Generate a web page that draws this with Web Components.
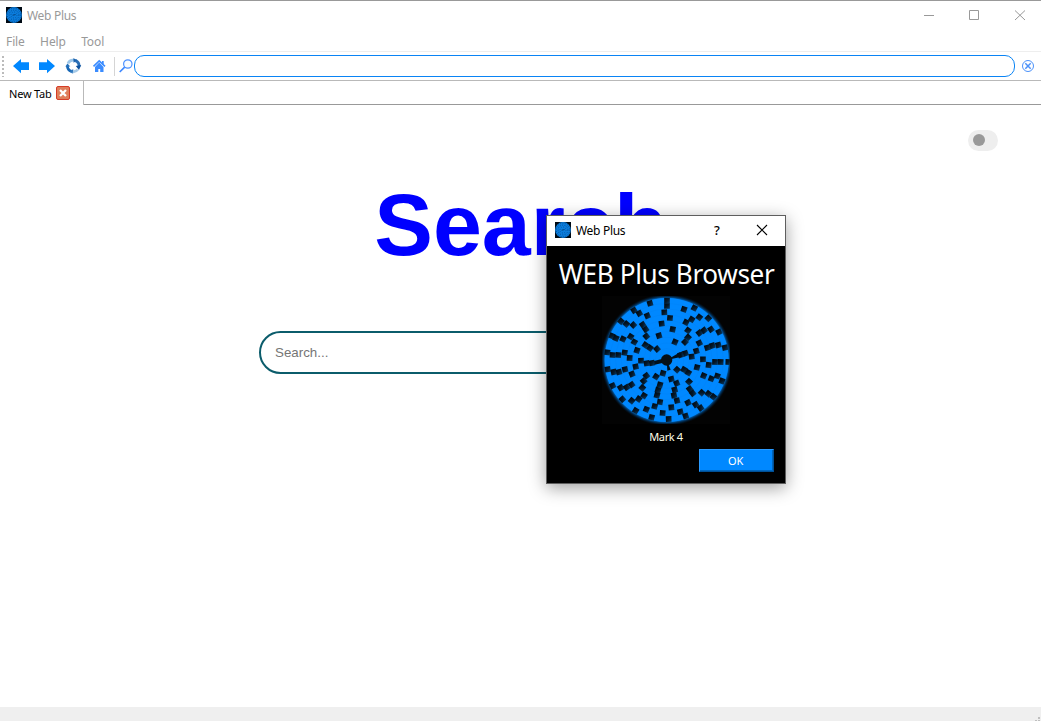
<!DOCTYPE html>
<html lang="en">
<head>
<meta charset="utf-8">
<title>Web Plus</title>
<style>
html,body{margin:0;width:1041px;height:721px;overflow:hidden;background:#fff;font-family:"Noto Sans",sans-serif}
</style>
</head>
<body>
<wp-window></wp-window>
<script>
const define = (name, html, setup) => {
  const t = document.createElement('template');
  t.innerHTML = html;
  customElements.define(name, class extends HTMLElement {
    constructor() {
      super();
      this.attachShadow({mode: 'open'}).append(t.content.cloneNode(true));
      if (setup) setup(this.shadowRoot);
    }
  });
};

define('wp-logo', `
<style>:host{display:block;width:16px;height:16px;flex:none;margin-bottom:2px}svg{display:block}</style>
<svg width="16" height="16" viewBox="0 0 16 16"><rect width="16" height="16" fill="#000a14"/><circle cx="8" cy="8" r="7.9" fill="#0b7ddd"/>
<g fill="none" stroke="#034b8e" stroke-width=".9"><circle cx="8" cy="8" r="6.8" stroke-dasharray="1.1 1.3"/><circle cx="8" cy="8" r="4.9" stroke-dasharray="1 1.4"/><circle cx="8" cy="8" r="3" stroke-dasharray=".8 1.5"/></g><path d="M6.6 8.2l3-.6" stroke="#023a70" stroke-width=".9"/></svg>`);

/* Centres of the small tiles on the disc, in thirds of a pixel. */
const tiles = [
[207,32],[207,48],[156,40],[108,61],[124,70],[148,77],[199,67],[258,58],[289,54],[216,84],[191,101],[281,88],[304,82],[331,85],[264,97],[69,94],[85,102],[106,105],[134,104],[143,118],[183,137],[224,118],[270,121],[304,129],[318,121],[339,118],[363,126],[270,142],[261,156],[231,156],[304,159],[42,138],[54,145],[75,147],[98,140],[109,156],[145,139],[142,165],[156,174],[177,177],[117,181],[28,187],[44,195],[61,195],[80,188],[95,204],[129,212],[146,220],[162,219],[262,190],[248,195],[295,183],[281,200],[328,173],[343,167],[361,165],[381,173],[315,208],[332,225],[351,216],[368,216],[391,216],[29,238],[47,246],[63,246],[81,238],[113,230],[102,252],[145,257],[174,260],[195,250],[237,239],[258,239],[271,248],[297,232],[317,257],[340,266],[358,258],[372,273],[44,287],[68,293],[86,292],[101,284],[137,273],[133,293],[186,284],[180,300],[177,316],[220,267],[236,280],[230,299],[228,316],[273,275],[275,297],[284,310],[311,308],[331,311],[346,320],[73,328],[101,332],[122,327],[138,317],[170,349],[186,336],[145,358],[113,362],[161,382],[194,369],[212,387],[220,352],[237,332],[270,338],[293,344],[308,354],[247,365],[263,378]];
define('wp-disc', `
<style>:host{display:block;width:128px;height:128px}svg{display:block}</style>
<svg width="128" height="128" viewBox="12 18 384 384">
<defs><radialGradient id="r" gradientUnits="userSpaceOnUse" cx="206" cy="210" r="198"><stop offset=".93" stop-color="#0078e0"/><stop offset="1" stop-color="#001a33" stop-opacity="0"/></radialGradient>
<linearGradient id="g" x1="0" y1="0" x2="1" y2="1"><stop offset="0" stop-color="#00070e"/><stop offset=".5" stop-color="#041727"/><stop offset="1" stop-color="#073b68"/></linearGradient></defs>
<rect x="12" y="18" width="384" height="384" fill="#030303"/>
<circle cx="206" cy="210" r="198" fill="url(#r)"/><circle cx="206" cy="210" r="186" fill="#0088ff"/>
<g fill="none" stroke="#0081f2" stroke-width="1"><circle cx="206" cy="210" r="170"/><circle cx="206" cy="210" r="153"/><circle cx="206" cy="210" r="136"/><circle cx="206" cy="210" r="119"/><circle cx="206" cy="210" r="102"/><circle cx="206" cy="210" r="85"/><circle cx="206" cy="210" r="68"/><circle cx="206" cy="210" r="51"/><circle cx="206" cy="210" r="34"/></g>
<g id="tiles" fill="url(#g)"></g>
<path d="M206 210L246 187L252 200ZM206 203L168 213L170 224L206 216ZM206 210L208 242L218 239Z" fill="#02101c"/>
<circle cx="206" cy="210" r="17" fill="#061018"/></svg>`, root => {
  const g = root.getElementById('tiles');
  for (const [x, y] of tiles) {
    const r = document.createElementNS('http://www.w3.org/2000/svg', 'rect');
    const a = Math.atan2(y - 210, x - 206) * 180 / Math.PI;
    const turn = ((a % 90) + 90) % 90;
    r.setAttribute('x', -8.5); r.setAttribute('y', -8.5);
    r.setAttribute('width', 17); r.setAttribute('height', 17);
    r.setAttribute('transform', `translate(${x} ${y}) rotate(${turn > 45 ? turn - 90 : turn})`);
    g.append(r);
  }
});

define('wp-titlebar', `
<style>:host{display:flex;height:30px;align-items:center;padding-left:6px;color:#999;font-size:12px;line-height:16px}
span{margin-left:5px;flex:1;letter-spacing:-.3px}svg{display:block}</style>
<wp-logo></wp-logo><span>Web Plus</span>
<svg width="119" height="30" viewBox="922 1 119 30" fill="none" stroke="#999"><path d="M924 15.5h10M969.5 10.5h9v9h-9z"/><path d="M1015 10.5l10 9.5M1025 10.5l-10 9.5"/></svg>`);

define('wp-menubar', `
<style>:host{display:flex;height:20px;padding-left:6px;gap:15.3px;color:#999;font-size:12px;line-height:21px;letter-spacing:-.1px;border-bottom:1px solid #eee}</style>
<span>File</span><span>Help</span><span>Tool</span>`);

define('wp-toolbar', `
<style>:host{display:flex;height:28px;align-items:center;border-bottom:1px solid #b9b9b9}
svg{display:block;flex:none}.url{box-sizing:border-box;height:22px;flex:1;border:1px solid #0a84f5;border-radius:10px;background:#fff}</style>
<svg width="134" height="28" viewBox="0 52 134 28">
<path d="M3 56v21" stroke="#bbb" stroke-width="2" stroke-dasharray="2 2"/>
<path d="M13 66L21 59V62.3H29V70H21V73.2Z" fill="#0088ff"/><path d="M55 66L47 59V62.3H39V70H47V73.2Z" fill="#0088ff"/>
<g fill="none" stroke-width="2.8"><path d="M68 63.5A5.8 5.8 0 0 1 74 60.2" stroke="#9cc6e8"/><path d="M75.5 60.6A5.8 5.8 0 0 1 79 66.5" stroke="#2b6fb6"/><path d="M77.8 69.5A5.8 5.8 0 0 1 72.5 71.7" stroke="#a5c9e7"/><path d="M71.5 71.4A5.8 5.8 0 0 1 67.4 66" stroke="#1767b6"/></g>
<path d="M75.8 66L81.2 65L79 70Z" fill="#0d519e"/><path d="M73.3 58.3L77.5 60L73.6 62.8Z" fill="#1c63ae"/><path d="M73.3 69L72.6 73.8L69.5 71.6Z" fill="#2c76bd"/><path d="M65.3 66.6L67.5 63.4L70.3 66.6Z" fill="#2470ba"/>
<path d="M93.5 66.3L99.2 60.8L105 66.3" fill="none" stroke="#3b8cff" stroke-width="1.6"/><path d="M102 61h1.7v3.5H102zM95 67L99.2 62.5L103.5 67V72H100.2V69H98.3V72H95Z" fill="#3b8cff"/>
<path d="M114.5 57v19" stroke="#d5d5d5"/>
<circle cx="127.8" cy="64" r="4.2" fill="#f8fbff" stroke="#4b91ff" stroke-width="1.2"/><path d="M124.7 67.2L119.7 72" stroke="#3b86ff" stroke-width="1.6"/>
</svg><div class="url"></div>
<svg width="26" height="28" viewBox="1015 52 26 28" fill="none" stroke="#4a91fa"><circle cx="1028" cy="66" r="5.5"/><path d="M1025.3 63.3l5.4 5.4M1030.7 63.3l-5.4 5.4" stroke-width="1.5"/></svg>`);

define('wp-tabs', `
<style>:host{display:flex;height:24px}.tab{box-sizing:border-box;width:84px;display:flex;align-items:center;padding:0 0 0 9px;gap:5px;border-right:1px solid #b9b9b9;font-size:11px;color:#000;white-space:nowrap}
.tab span{width:42px;letter-spacing:-.2px;line-height:15px}.rest{box-sizing:border-box;flex:1;border-bottom:1px solid #999}svg{display:block;flex:none}</style>
<div class="tab"><span>New Tab</span><svg width="14" height="14" viewBox="0 0 14 14"><rect x=".5" y=".5" width="13" height="13" rx="1.5" fill="#df7f5c" stroke="#d63d27"/><path d="M4 4l6 6M10 4l-6 6" stroke="#fff" stroke-width="2.3"/></svg></div><div class="rest"></div>`);

define('wp-page', `
<style>:host{flex:1;display:flex;flex-direction:column;align-items:center;background:#fff;font-family:"Liberation Sans",Arial,sans-serif}
.switch{box-sizing:border-box;align-self:flex-end;margin:25px 43px 0 0;width:30px;height:21px;border-radius:11px;background:#eee;padding:4px 5px}
.switch i{display:block;width:12px;height:12px;border-radius:50%;background:#999}
h1{margin:24px 0 0 1px;font-size:88px;line-height:100px;font-weight:bold;color:#00f}
.box{box-sizing:border-box;margin-top:56px;width:523px;height:43px;border:2px solid #0b5c6b;border-radius:22px;padding-left:14px;font-size:13.33px;line-height:39px;color:#757575}</style>
<div class="switch"><i></i></div><h1>Search</h1><div class="box">Search...</div>`);

define('wp-status', `
<style>:host{display:flex;justify-content:flex-end;align-items:flex-end;height:14px;background:#efefef}svg{display:block}</style>
<svg width="8" height="6" viewBox="0 0 8 6" fill="#bfbfbf"><path d="M5 2h2v2H5zM2 5h2v1H2zM5 5h2v1H5z"/></svg>`);

define('wp-dialog', `
<style>:host{position:absolute;left:546px;top:214px;box-sizing:border-box;width:240px;height:269px;border:1px solid #5e5e5e;background:#000;box-shadow:0 4px 16px rgba(0,0,0,.38);display:flex;flex-direction:column;align-items:center;color:#fff}
header{box-sizing:border-box;width:100%;height:30px;background:#fff;color:#000;display:flex;align-items:center;padding-left:8px;font-size:12px;line-height:16px}
header span{margin-left:5px;flex:1;letter-spacing:-.3px}svg{display:block}header b{font-weight:500;font-size:13px;line-height:16px;margin-bottom:2px;width:38px}
h2{margin:11px 0 0;font-weight:400;font-size:27.5px;line-height:34px;white-space:nowrap;letter-spacing:-.4px;transform:scaleX(.95)}
wp-disc{margin-top:5px}p{margin:5px 0 0;font-size:11px;line-height:16px;letter-spacing:-.35px;color:#ffffe8}
.ok{box-sizing:border-box;align-self:flex-end;margin:4px 11px 0 0;width:75px;height:23px;background:#0088ff;border:1px solid #2b9bff;border-right-color:#005096;border-bottom-color:#005096;box-shadow:inset -1px -1px #0065bd;text-align:center;font-size:11px;letter-spacing:-.3px;line-height:22px;padding-right:2px}</style>
<header><wp-logo></wp-logo><span>Web Plus</span><b>?</b><svg width="33" height="30" viewBox="0 0 33 30" fill="none" stroke="#000" stroke-width="1.1"><path d="M5 9l10 10M15 9l-10 10"/></svg></header>
<h2>WEB Plus Browser</h2><wp-disc></wp-disc><p>Mark 4</p><div class="ok">OK</div>`);

define('wp-window', `
<style>:host{position:relative;box-sizing:border-box;width:1041px;height:721px;display:flex;flex-direction:column;border-top:1px solid #999}</style>
<wp-titlebar></wp-titlebar><wp-menubar></wp-menubar><wp-toolbar></wp-toolbar><wp-tabs></wp-tabs><wp-page></wp-page><wp-status></wp-status><wp-dialog></wp-dialog>`);
</script>
</body>
</html>
